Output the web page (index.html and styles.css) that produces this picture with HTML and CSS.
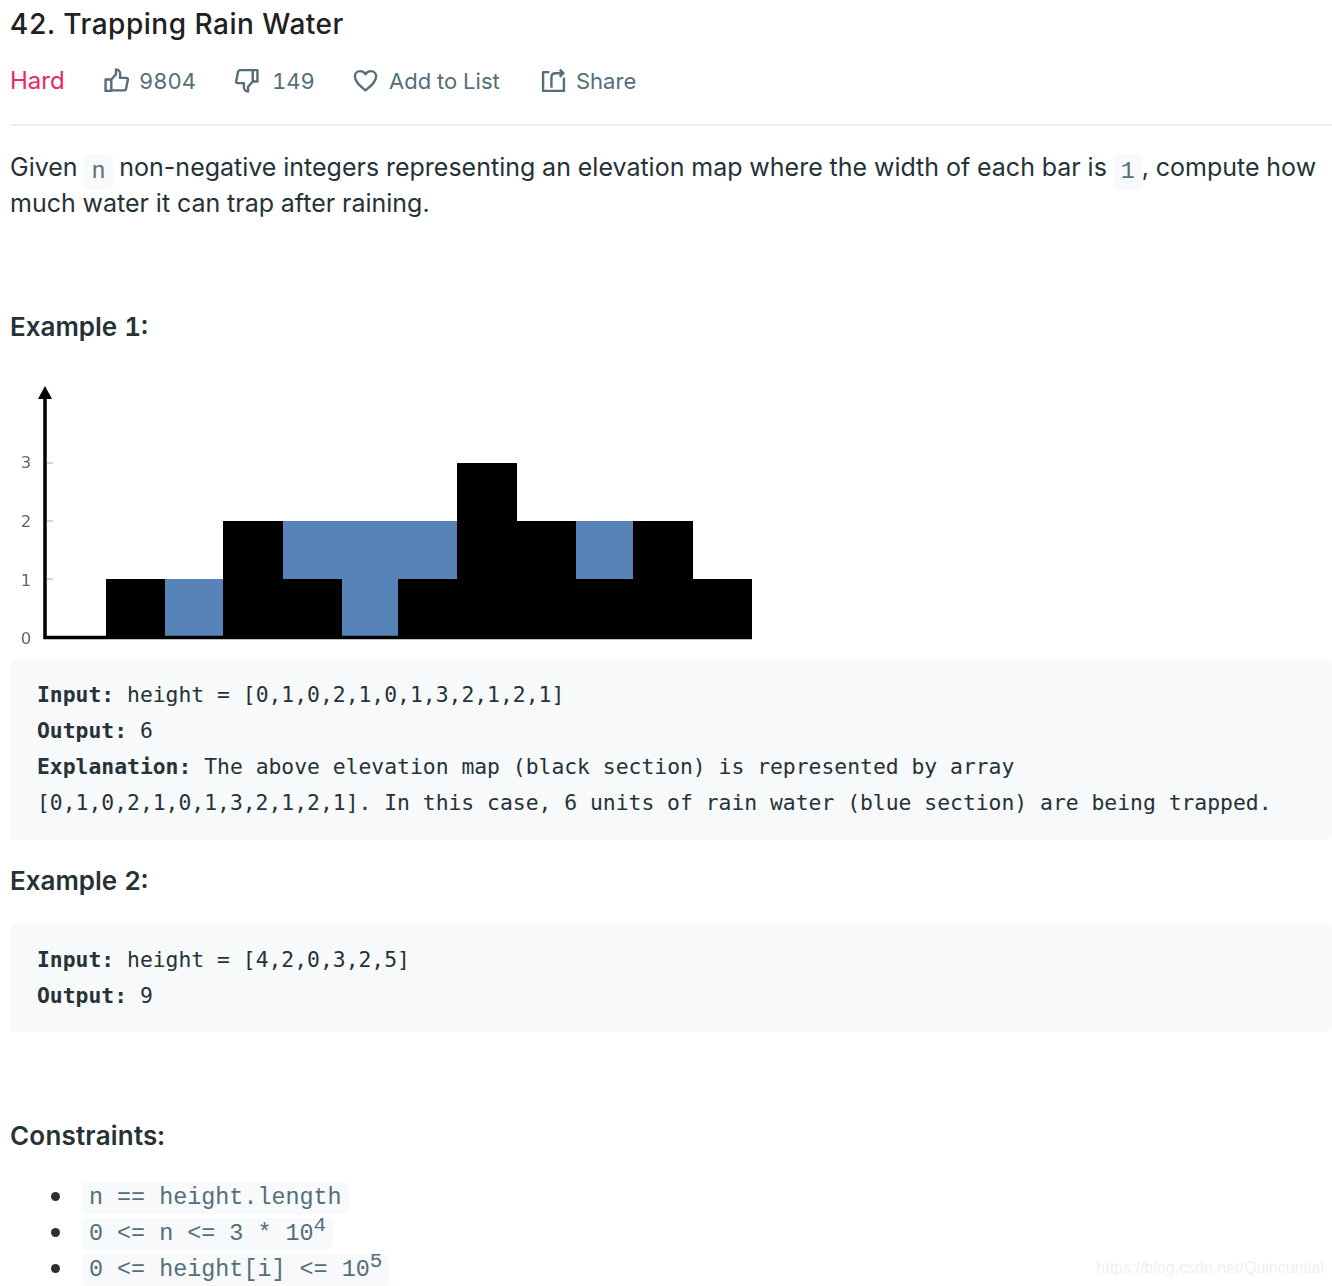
FILE: index.html
```html
<!DOCTYPE html>
<html lang="en">
<head>
  <meta charset="UTF-8">
  <title>42. Trapping Rain Water</title>
  <link rel="stylesheet" href="styles.css">
</head>
<body>
  <div class="question-title">42. Trapping Rain Water</div>

  <div class="question-meta">
    <span class="difficulty">Hard</span>
    <span class="meta-btn likes">
      <svg class="icon" viewBox="0 0 24 24"><path d="M1.500 11h5.500v11H1.500zM7 11l4.500-5V1.500c2.500 0 4 1.800 4 4v4h6c1 0 1.600.8 1.400 1.800l-1.800 9c-.2.7-.7 1.200-1.500 1.200H7"/></svg>
      9804
    </span>
    <span class="meta-btn dislikes">
      <svg class="icon" viewBox="0 0 24 24"><path d="M22.500 13H18V2h4.500zM18 13l-4.500 5v4.500c-2.500 0-4-1.800-4-4v-4h-6c-1 0-1.600-.8-1.400-1.800l1.800-9C4.100 3.500 4.600 2 5.400 2H18"/></svg>
      149
    </span>
    <span class="meta-btn add-list">
      <svg class="icon" viewBox="0 0 24 24"><path d="M12 21.500C6 16.500 1.800 13 1.800 8.200 1.800 5 4.200 3 6.900 3c2.100 0 4 1.100 5.100 3 1.100-1.900 3-3 5.100-3 2.700 0 5.100 2 5.100 5.200 0 4.800-4.200 8.300-10.200 13.300z"/></svg>
      Add to List
    </span>
    <span class="meta-btn share">
      <svg class="icon" viewBox="0 0 24 24"><path d="M8 4H2v18h20V9M10 19V9c0-2.500 1.500-4 4-4h7M18 1.500L21.500 5 18 8.500"/></svg>
      Share
    </span>
  </div>

  <div class="content">
    <p class="intro">Given <code>n</code> non-negative integers representing an elevation map where the width of each bar is <code>1</code>, compute how much water it can trap after raining.</p>

    <h4 class="first">Example 1:</h4>

    <svg class="elevation-map" viewBox="0 0 742 275">
      <g class="bars-black">
        <rect x="96" y="204" width="59" height="58"/>
        <rect x="213" y="146" width="60" height="116"/>
        <rect x="273" y="204" width="59" height="58"/>
        <rect x="388" y="204" width="59" height="58"/>
        <rect x="447" y="88" width="60" height="174"/>
        <rect x="507" y="146" width="59" height="116"/>
        <rect x="566" y="204" width="57" height="58"/>
        <rect x="623" y="146" width="60" height="116"/>
        <rect x="683" y="204" width="59" height="58"/>
      </g>
      <g class="bars-blue">
        <rect x="155" y="204" width="58" height="58"/>
        <rect x="273" y="146" width="174" height="58"/>
        <rect x="332" y="204" width="56" height="58"/>
        <rect x="566" y="146" width="57" height="58"/>
      </g>
      <path class="axis" d="M35 18V262.500H742"/>
      <path class="arrow" d="M35 11l7 13H28z"/>
      <path class="tick" d="M37 88h6M37 146h6M37 204h6"/>
      <g class="axis-labels">
        <text x="16" y="93">3</text>
        <text x="16" y="152">2</text>
        <text x="16" y="211">1</text>
        <text x="16" y="269">0</text>
      </g>
    </svg>

    <pre class="first-block"><b>Input:</b> height = [0,1,0,2,1,0,1,3,2,1,2,1]
<b>Output:</b> 6
<b>Explanation:</b> The above elevation map (black section) is represented by array
[0,1,0,2,1,0,1,3,2,1,2,1]. In this case, 6 units of rain water (blue section) are being trapped.</pre>

    <h4>Example 2:</h4>

    <pre><b>Input:</b> height = [4,2,0,3,2,5]
<b>Output:</b> 9</pre>

    <h4 class="constraints">Constraints:</h4>

    <ul>
      <li><code>n == height.length</code></li>
      <li><code>0 &lt;= n &lt;= 3 * 10<sup>4</sup></code></li>
      <li><code>0 &lt;= height[i] &lt;= 10<sup>5</sup></code></li>
    </ul>
  </div>

  <div class="watermark">https://blog.csdn.net/Quincuntial</div>
</body>
</html>
```

FILE: styles.css
```css
html, body {
  height: 1286px;
  overflow: hidden;
}

body {
  position: relative;
  margin: 0;
  padding: 0 0 0 10px;
  font-family: 'Inter', sans-serif;
  background: #fff;
  color: #263238;
}

.question-title {
  font-size: 28px;
  font-weight: 500;
  font-variant-numeric: tabular-nums;
  line-height: 36px;
  letter-spacing: 0.5px;
  padding-top: 6px;
  color: #212121;
}

.question-meta {
  display: flex;
  align-items: center;
  height: 77px;
  padding-bottom: 5px;
  border-bottom: 2px solid #eee;
  font-size: 22px;
  font-variant-numeric: tabular-nums;
  color: #546e7a;
}

.question-meta .difficulty {
  color: #ec275f;
  font-size: 24px;
  width: 94px;
}

.meta-btn {
  display: flex;
  align-items: center;
  gap: 11px;
}

.likes { width: 130px; gap: 10px; }
.dislikes { width: 119px; gap: 13px; }
.add-list { width: 188px; }
.share { gap: 10px; }

.icon {
  width: 25px;
  height: 25px;
  fill: none;
  stroke: #546e7a;
  stroke-width: 2.3;
  stroke-linejoin: round;
}

.content {
  font-size: 25px;
  line-height: 36px;
}

.intro {
  margin: 23px 0 0;
  word-spacing: -0.2px;
}

code {
  font-family: 'Liberation Mono', monospace;
  font-size: 23.4px;
  line-height: 1;
  color: #546e7a;
  background: #f7f9fa;
  border-radius: 5px;
  padding: 5px 7px;
}

.intro code {
  vertical-align: -2px;
}

sup {
  font-size: 21px;
  line-height: 0;
}

h4 {
  margin: 0;
  font-size: 26px;
  font-weight: 600;
  font-variant-numeric: tabular-nums;
  line-height: 36px;
  padding-top: 23px;
  padding-bottom: 25px;
}

h4.first {
  padding-top: 88px;
  padding-bottom: 0;
}

.elevation-map {
  display: block;
  width: 742px;
  height: 275px;
  margin-top: 30px;
  filter: blur(0.6px);
}

.bars-black { fill: #000; }
.bars-blue { fill: #5784b8; }
.axis { fill: none; stroke: #000; stroke-width: 3.5; }
.arrow { fill: #000; }
.tick { fill: none; stroke: #aaa; stroke-width: 1; }

.axis-labels text {
  font-family: 'DejaVu Sans', sans-serif;
  font-size: 16.5px;
  fill: #666;
  text-anchor: middle;
}

pre {
  margin: 0;
  padding: 18px 27px;
  background: #f7f9fa;
  border-radius: 5px;
  font-family: 'DejaVu Sans Mono', monospace;
  font-size: 21.36px;
  line-height: 36px;
  color: #263238;
}

pre.first-block {
  margin-top: 10px;
  padding: 17px 27px 19px;
}

h4.constraints {
  padding-top: 86px;
  padding-bottom: 26px;
  letter-spacing: 0.2px;
}

ul {
  margin: 0;
  padding: 0 0 0 41px;
  list-style: none;
}

li {
  display: flex;
  align-items: center;
  height: 36px;
}

li::before {
  content: "";
  width: 9px;
  height: 9px;
  margin: 0 22px 4px 0;
  border-radius: 50%;
  background: #263238;
}

li code {
  padding: 5px 7px 4px;
}

.watermark {
  position: absolute;
  right: 8px;
  bottom: 9px;
  font-family: 'Liberation Sans', sans-serif;
  font-size: 16px;
  color: #f0f0f0;
}
```
